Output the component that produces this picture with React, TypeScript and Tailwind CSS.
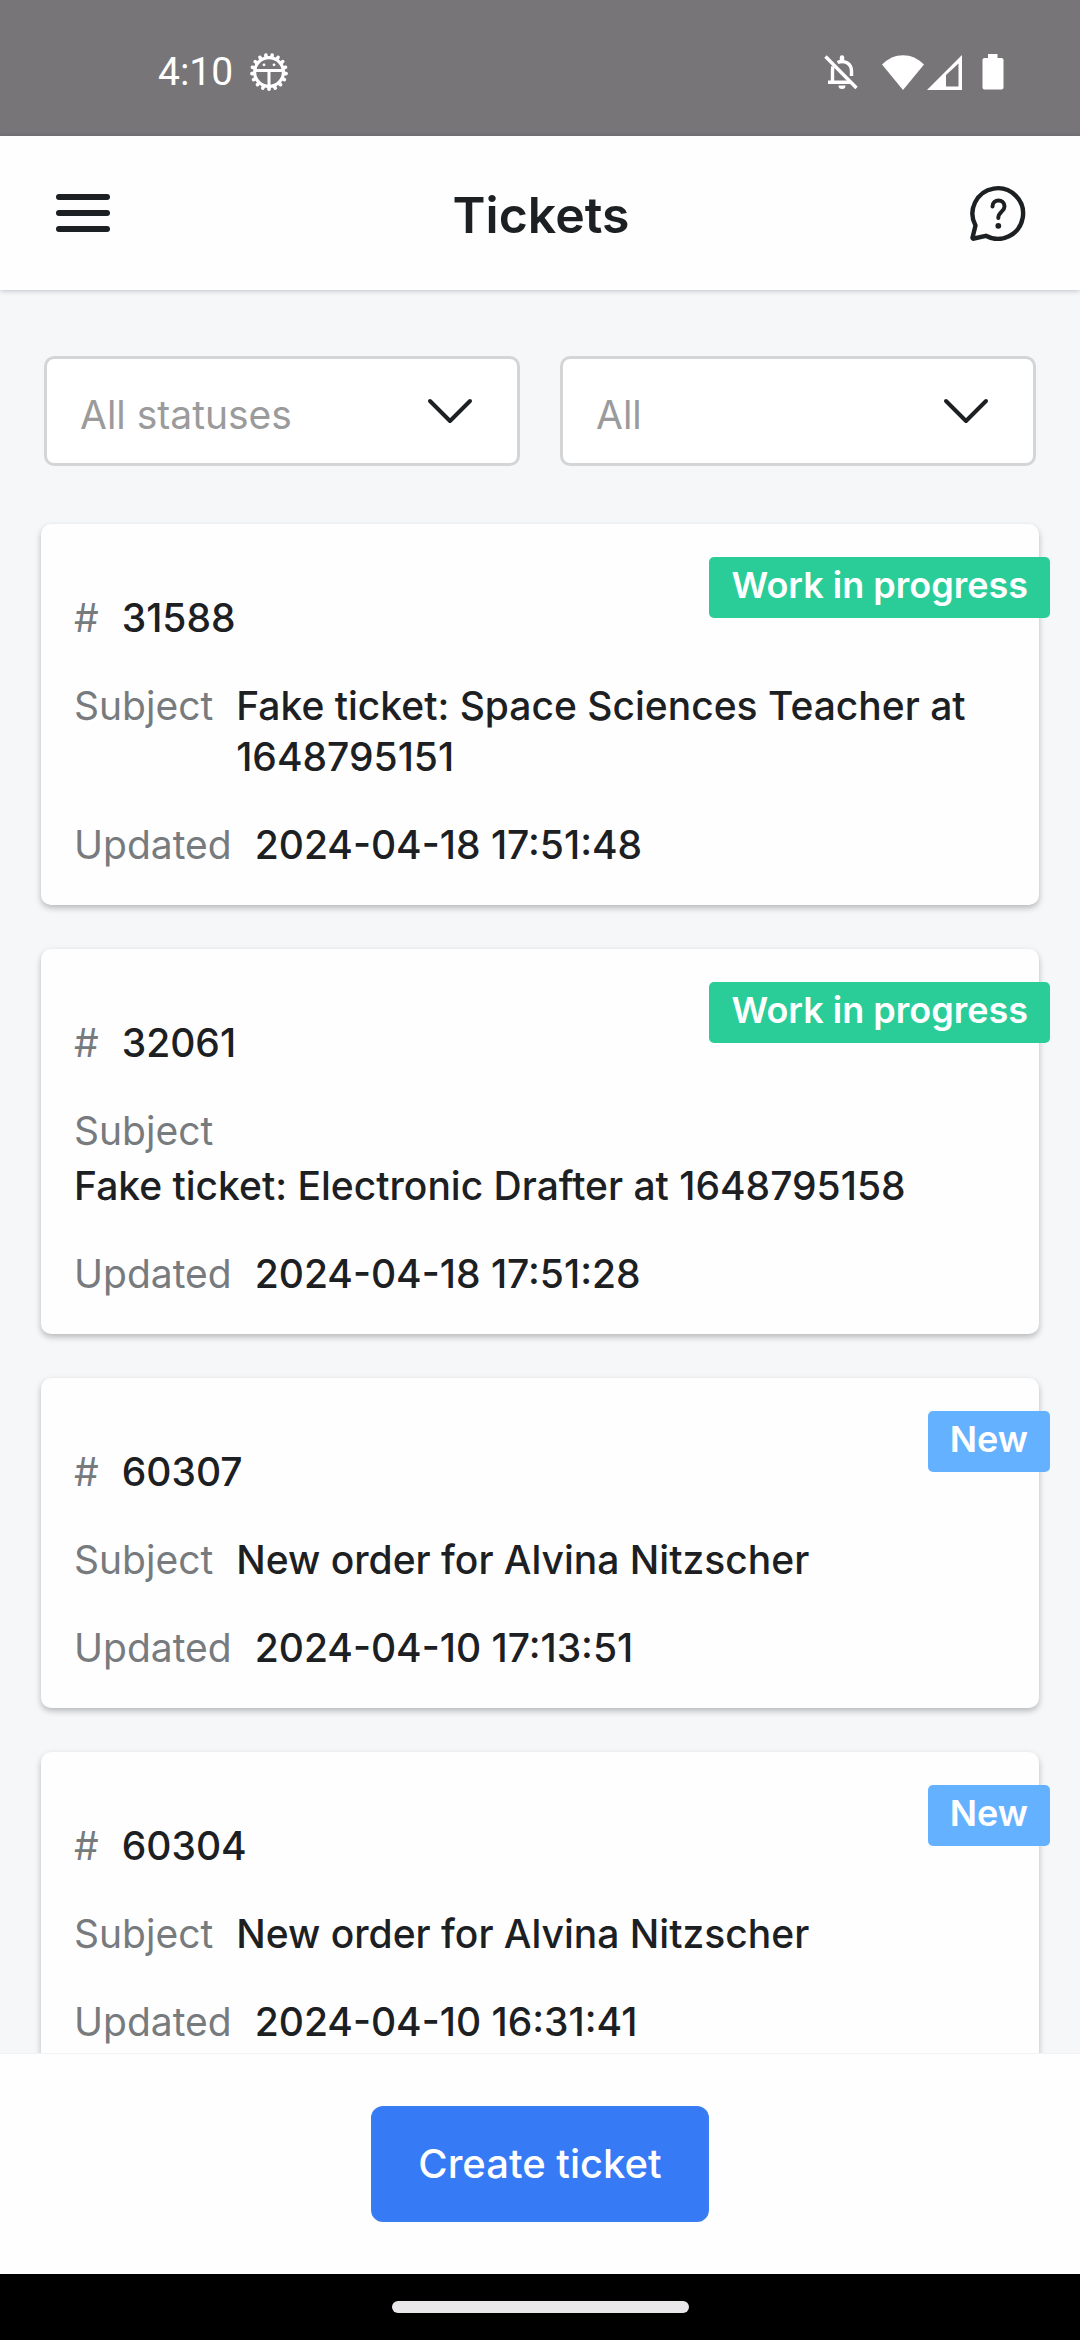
import React from 'react';
import { clsx } from 'clsx';

type Status = 'progress' | 'new';

interface Ticket {
  id: string;
  subject: string;
  updated: string;
  status: Status;
  stacked?: boolean;
}

const tickets: Ticket[] = [
  {
    id: '31588',
    subject: 'Fake ticket: Space Sciences Teacher at 1648795151',
    updated: '2024-04-18 17:51:48',
    status: 'progress',
  },
  {
    id: '32061',
    subject: 'Fake ticket: Electronic Drafter at 1648795158',
    updated: '2024-04-18 17:51:28',
    status: 'progress',
    stacked: true,
  },
  {
    id: '60307',
    subject: 'New order for Alvina Nitzscher',
    updated: '2024-04-10 17:13:51',
    status: 'new',
  },
  {
    id: '60304',
    subject: 'New order for Alvina Nitzscher',
    updated: '2024-04-10 16:31:41',
    status: 'new',
  },
];

const statusLabels: Record<Status, string> = {
  progress: 'Work in progress',
  new: 'New',
};

const getStatusColor = (status: Status) => {
  switch (status) {
    case 'progress':
      return 'bg-[#2acd98]';
    default:
      return 'bg-[#64b1ff]';
  }
};

const gearTeeth = Array.from({ length: 17 }, (_, i) => (i * 360) / 17);

function GearIcon() {
  return (
    <svg width="40" height="40" viewBox="0 0 40 40" fill="none" stroke="#fff" aria-hidden="true">
      <circle cx="20" cy="20" r="14.4" strokeWidth="3.2" />
      {gearTeeth.map((angle) => (
        <path
          key={angle}
          d="M20 35V37.2"
          strokeWidth="3.6"
          strokeLinecap="round"
          transform={`rotate(${angle} 20 20)`}
        />
      ))}
      <path d="M6 18.5H34M20 19V34" strokeWidth="3" />
      <circle cx="15" cy="12.8" r="1.4" fill="#fff" stroke="none" />
      <circle cx="25" cy="12.8" r="1.4" fill="#fff" stroke="none" />
    </svg>
  );
}

function StatusBar() {
  return (
    <div className="flex h-[136px] shrink-0 items-center justify-between bg-[#787579] pt-2 pr-[76px] pl-[158px] text-white">
      <div className="flex items-center gap-4">
        <span className="font-[Roboto,sans-serif] text-[39px] leading-[46px]">4:10</span>
        <GearIcon />
      </div>
      <div className="flex items-center">
        <svg width="34" height="36" viewBox="0 0 34 36" fill="none" stroke="#fff" aria-hidden="true">
          <path d="M1.5 2.5L32.5 34" strokeWidth="3.4" />
          <path d="M13.5 8.5C20 5.5 27.5 9.5 27.5 17V22" strokeWidth="3.4" />
          <path d="M9 12.5C8.5 14 8.5 15.5 8.5 17V28M4 28.3H26" strokeWidth="3.4" />
          <path d="M18 7V3.5" strokeWidth="4.4" strokeLinecap="round" />
          <path d="M14.5 31.5H21.5A3.5 3.5 0 0 1 14.5 31.5Z" fill="#fff" stroke="none" />
        </svg>
        <svg className="ml-6" width="42" height="35" viewBox="0 0 42 35" fill="#fff" aria-hidden="true">
          <path d="M21 35L0 9.5C12 -3 30 -3 42 9.5Z" />
        </svg>
        <svg className="ml-[3px]" width="35" height="35" viewBox="0 0 35 35" aria-hidden="true">
          <path d="M0 35L35 0V35ZM19 20V31.5H31.5V8.5Z" fill="#fff" fillRule="evenodd" />
        </svg>
        <svg className="ml-5" width="22" height="36" viewBox="0 0 22 36" fill="#fff" aria-hidden="true">
          <path d="M6 0H15.5V4H19.5A2 2 0 0 1 21.5 6V33.5A2 2 0 0 1 19.5 35.5H2.5A2 2 0 0 1 .5 33.5V6A2 2 0 0 1 2.5 4H6Z" />
        </svg>
      </div>
    </div>
  );
}

function Header() {
  return (
    <header className="relative z-10 flex h-[154px] shrink-0 items-center justify-between bg-[#fefefe] px-[54px] shadow-[0_1px_5px_rgba(0,20,30,0.22)]">
      <button type="button" aria-label="Menu" className="flex w-[58px] flex-col gap-[10px] px-[2px]">
        <span className="h-[6px] w-full rounded-full bg-[#1d2022]" />
        <span className="h-[6px] w-full rounded-full bg-[#1d2022]" />
        <span className="h-[6px] w-full rounded-full bg-[#1d2022]" />
      </button>
      <h1 className="pt-1 text-[50px] leading-[60px] font-semibold">Tickets</h1>
      <button type="button" aria-label="Help">
        <svg width="56" height="56" viewBox="0 0 56 56" fill="none" stroke="#1d2022" strokeLinecap="round" strokeLinejoin="round">
          <path
            d="M5.5 40.5A25.3 25.3 0 1 1 15.8 50.8L4 53.5A1 1 0 0 1 2.6 52.2Z"
            strokeWidth="4.4"
          />
          <path d="M22.5 21.5C22.5 13.5 34.5 13.5 34.5 21.5C34.5 26.5 28.3 27 28.3 33" strokeWidth="4" />
          <circle cx="28.3" cy="40.8" r="2.9" fill="#1d2022" stroke="none" />
        </svg>
      </button>
    </header>
  );
}

interface FilterProps {
  label: string;
  options: string[];
}

function Filter({ label, options }: FilterProps) {
  return (
    <div className="relative min-w-0 flex-1">
      <select
        aria-label={label}
        className="h-[110px] w-full appearance-none rounded-[10px] border-3 border-[#d3d5d7] bg-white pt-2 pr-28 pl-[33px] text-[39px] text-[#9b9b9c]"
      >
        {options.map((option) => (
          <option key={option}>{option}</option>
        ))}
      </select>
      <svg
        className="pointer-events-none absolute top-[42px] right-[47px]"
        width="46"
        height="28"
        viewBox="0 0 46 28"
        fill="none"
        stroke="#1d2022"
        strokeWidth="4"
        strokeLinecap="round"
        strokeLinejoin="round"
        aria-hidden="true"
      >
        <path d="M3 3L23 23L43 3" />
      </svg>
    </div>
  );
}

interface FieldProps {
  label: string;
  value: string;
  stacked?: boolean;
}

function Field({ label, value, stacked }: FieldProps) {
  return (
    <div className={clsx('flex', stacked ? 'flex-col gap-1' : 'gap-[23px]')}>
      <dt className="text-[#777b7e]">{label}</dt>
      <dd className="font-medium">{value}</dd>
    </div>
  );
}

function TicketCard({ ticket }: { ticket: Ticket }) {
  return (
    <article className="relative rounded-[10px] bg-[#fefefe] px-[33px] pt-[68px] pb-[35px] shadow-[0_3px_6px_rgba(0,0,0,0.26)]">
      <span
        className={clsx(
          'absolute top-[33px] -right-[11px] rounded-[5px] px-[22px] pt-1 pb-[9px] text-[36px] leading-[48px] font-semibold text-white',
          getStatusColor(ticket.status)
        )}
      >
        {statusLabels[ticket.status]}
      </span>
      <dl className="flex flex-col gap-[37px] text-[39px] leading-[51px]">
        <Field label="#" value={ticket.id} />
        <Field label="Subject" value={ticket.subject} stacked={ticket.stacked} />
        <Field label="Updated" value={ticket.updated} />
      </dl>
    </article>
  );
}

export default function App() {
  return (
    <div className="flex h-screen flex-col bg-[#f6f7f9] font-[Inter,sans-serif] text-[#1d2022]">
      <StatusBar />
      <Header />
      <main className="min-h-0 flex-1 overflow-y-auto px-[41px] pt-[66px] [scrollbar-width:none]">
        <div className="flex gap-10 px-[3px]">
          <Filter label="Status" options={['All statuses', 'New', 'Work in progress']} />
          <Filter label="Type" options={['All']} />
        </div>
        <div className="mt-[58px] flex flex-col gap-11 pb-11">
          {tickets.map((ticket) => (
            <TicketCard key={ticket.id} ticket={ticket} />
          ))}
        </div>
      </main>
      <footer className="flex shrink-0 justify-center border-t border-[#f3f3f6] bg-[#fefefe] py-[52px]">
        <button
          type="button"
          className="h-[116px] rounded-[12px] border-2 border-[#3a7df0] bg-[#367af6] px-[45px] text-[40px] font-medium text-white"
        >
          Create ticket
        </button>
      </footer>
      <div className="flex h-[66px] shrink-0 items-center justify-center bg-black">
        <div className="h-3 w-[297px] rounded-full bg-[#e9e7e9]" />
      </div>
    </div>
  );
}
